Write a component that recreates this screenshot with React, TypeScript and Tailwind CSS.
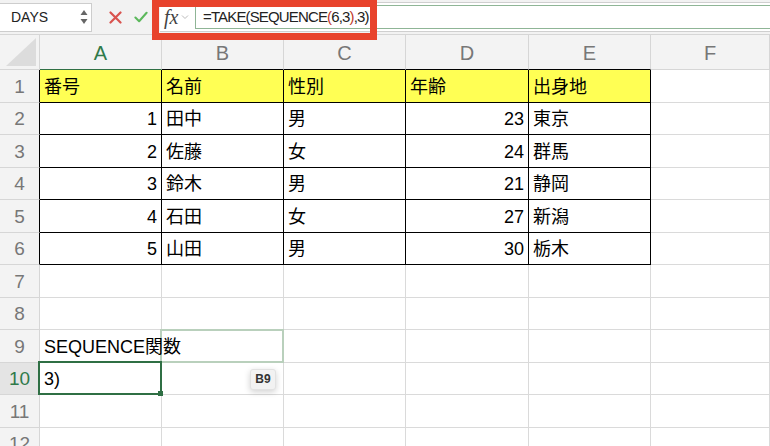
import React from "react";

const FONT = { fontFamily: '"Liberation Sans", Arial, "Noto Sans CJK JP", sans-serif' };

const COLS = ["A", "B", "C", "D", "E", "F"];

const DATA: (string | number)[][] = [
  ["番号", "名前", "性別", "年齢", "出身地"],
  [1, "田中", "男", 23, "東京"],
  [2, "佐藤", "女", 24, "群馬"],
  [3, "鈴木", "男", 21, "静岡"],
  [4, "石田", "女", 27, "新潟"],
  [5, "山田", "男", 30, "栃木"],
];

const Cell = ({ row, col }: { row: number; col: number }) => {
  const inTable = row <= 6 && col <= 4;
  const value = inTable ? DATA[row - 1][col] : undefined;
  const isNum = typeof value === "number";
  const yellow = row === 1 && col <= 4;

  let border = "border-[#dadada]";
  if (inTable) border = "border-black";
  // column F next to the table keeps a grey bottom line
  return (
    <div
      className={`relative flex items-center border-r border-b ${border} ${yellow ? "bg-[#ffff54]" : "bg-white"} ${
        isNum ? "justify-end pr-[4px]" : "pl-[4px]"
      } text-[18px] text-black leading-none pt-[2px]`}
    >
      {value !== undefined && <span>{value}</span>}
      {row === 9 && col === 0 && (
        <span className="absolute left-[4px] whitespace-nowrap z-10">SEQUENCE関数</span>
      )}
      {row === 9 && col === 1 && (
        <div className="absolute -left-[2px] -top-[1px] -right-[1px] -bottom-[1px] border-2 border-[#b9d0bc]" />
      )}
      {row === 10 && col === 0 && (
        <>
          <span>3)</span>
          <div className="absolute -left-[2px] -top-[2px] -right-[1px] -bottom-[1px] border-2 border-[#2f6f44] z-20">
            <div className="absolute -right-[3px] -bottom-[3px] w-[5px] h-[5px] bg-[#2f6f44]" />
          </div>
        </>
      )}
      {row === 10 && col === 1 && (
        <div className="absolute left-[88px] top-[6px] h-[21px] w-[26px] rounded-[3px] bg-[#f2f2f2] border border-[#e2e2e2] shadow-[0_2px_6px_rgba(0,0,0,0.18)] flex items-center justify-center text-[12px] font-semibold text-[#333] z-30">
          B9
        </div>
      )}
    </div>
  );
};

export default function App() {
  const rows = Array.from({ length: 12 }, (_, i) => i + 1);
  return (
    <div className="w-[770px] h-[446px] overflow-hidden bg-white relative" style={FONT}>
      {/* formula bar */}
      <div className="h-[35px] bg-[#f2f2f2] border-b border-[#d6d6d6] flex items-center">
        <div className="w-[92px] h-[29px] bg-white border border-[#cdcdcd] border-l-0 flex items-center pl-[11px] pr-[3px] text-[14px] text-[#222]">
          <span className="flex-1">DAYS</span>
          <svg width="8" height="18" viewBox="0 0 8 18">
            <path d="M4 2 L7.5 7 L0.5 7 Z" fill="#666" />
            <path d="M4 16 L7.5 11 L0.5 11 Z" fill="#666" />
          </svg>
        </div>
        <div className="w-[40px] flex justify-center ml-[3px]">
          <svg width="13" height="13" viewBox="0 0 13 13">
            <path d="M1.5 1.5 L11.5 11.5 M11.5 1.5 L1.5 11.5" stroke="#d9534f" strokeWidth="2.2" strokeLinecap="round" />
          </svg>
        </div>
        <div className="w-[20px] flex justify-center -ml-[4px]">
          <svg width="14" height="12" viewBox="0 0 15 12">
            <path d="M1.5 6.5 L5.5 10.5 L13.5 1.5" stroke="#5cb85c" strokeWidth="2.2" fill="none" strokeLinecap="round" strokeLinejoin="round" />
          </svg>
        </div>
        <div className="ml-[9px] flex-1 h-[30px] bg-white border-y border-[#cfcfcf] flex items-center">
          <div className="w-[35px] flex items-center pl-[4px] gap-[3px] text-[#444]">
            <span className="text-[20px] italic leading-none" style={{ fontFamily: '"Liberation Serif", "Times New Roman", serif' }}>
              fx
            </span>
            <svg width="8" height="6" viewBox="0 0 8 6">
              <path d="M1 1.5 L4 4.5 L7 1.5" stroke="#bbb" strokeWidth="1" fill="none" />
            </svg>
          </div>
          <div className="flex-1 h-[24px] border-y border-l border-[#8fb596] flex items-center pl-[7px] text-[15px] tracking-[-0.85px] text-[#222]">
            <span>=TAKE(SEQUENCE</span>
            <span className="text-[#c0392b]">(</span>
            <span>6,3</span>
            <span className="text-[#c0392b]">)</span>
            <span>,3)</span>
            <span className="ml-[2px] w-px h-[17px] bg-black" />
          </div>
        </div>
      </div>

      {/* red highlight around the formula */}
      <div className="absolute left-[152px] top-0 w-[225px] h-[40px] border-[7px] border-[#e8432c] z-40" />

      {/* sheet grid */}
      <div className="grid grid-cols-[40px_122px_122px_122px_123px_122px_1fr] grid-rows-[35px_repeat(12,32.5px)]">
        <div className="bg-[#f3f3f3] border-r border-b border-[#d6d6d6] flex items-end justify-end p-[3px]">
          <svg width="30" height="28" viewBox="0 0 30 28">
            <path d="M30 0 L30 28 L0 28 Z" fill="#dcdcdc" />
          </svg>
        </div>
        {COLS.map((c, i) => (
          <div
            key={c}
            className={`bg-[#f3f3f3] border-r border-b ${
              i === 0 ? "border-b-[#2f6f44] border-r-[#d6d6d6] text-[#2f7a4a]" : i <= 4 ? "border-r-[#d6d6d6] border-b-black text-[#777]" : "border-[#d6d6d6] text-[#777]"
            } flex items-center justify-center text-[20px] pt-[2px]`}
          >
            {c}
          </div>
        ))}
        {rows.map((r) => (
          <React.Fragment key={r}>
            <div
              className={`border-r border-b flex items-center justify-center text-[19px] pt-[2px] ${
                r === 10 ? "bg-[#e4e4e4] text-[#2f7a4a] border-r-[#2f6f44] border-b-[#d6d6d6]" : "bg-[#f3f3f3] text-[#777] border-b-[#d6d6d6]"
              } ${r <= 6 ? "border-r-black" : r === 10 ? "" : "border-r-[#d6d6d6]"}`}
            >
              {r}
            </div>
            {COLS.map((_, ci) => (
              <Cell key={ci} row={r} col={ci} />
            ))}
          </React.Fragment>
        ))}
      </div>
    </div>
  );
}
